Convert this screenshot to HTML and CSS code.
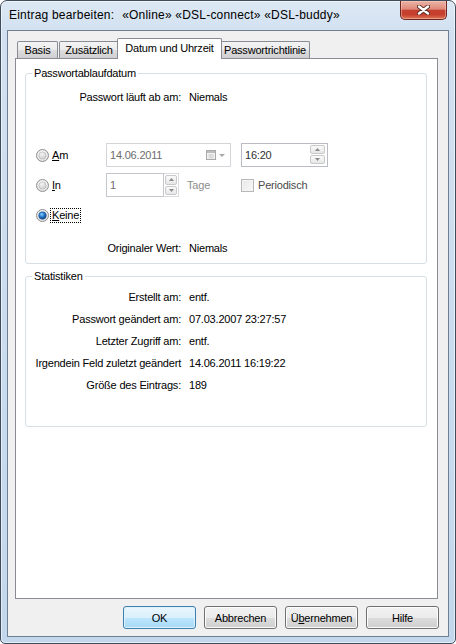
FILE: index.html
```html
<!DOCTYPE html>
<html lang="de">
<head>
<meta charset="utf-8">
<title>Eintrag bearbeiten</title>
<link rel="stylesheet" href="styles.css">
</head>
<body>
<div class="window">
  <div class="titlebar">
    <span class="title"><span class="title-main">Eintrag bearbeiten:</span><span class="title-entry">«Online» «DSL-connect» «DSL-buddy»</span></span>
    <div class="close">
      <svg width="13" height="10" viewBox="0 0 13 10">
        <path d="M2 1.5 L11 8.5 M11 1.5 L2 8.5" stroke="#5a2a24" stroke-width="4.2" stroke-linecap="round"/>
        <path d="M2 1.5 L11 8.5 M11 1.5 L2 8.5" stroke="#ffffff" stroke-width="2.4" stroke-linecap="round"/>
      </svg>
    </div>
  </div>
  <div class="client">
    <div class="tabs">
      <div class="tab tab-basis">Basis</div>
      <div class="tab tab-extra">Zusätzlich</div>
      <div class="tab tab-active">Datum und Uhrzeit</div>
      <div class="tab tab-policy">Passwortrichtlinie</div>
    </div>
    <div class="panel">
      <fieldset class="group group-expiry">
        <legend>Passwortablaufdatum</legend>
        <div class="info-row row-expires"><span class="lbl">Passwort läuft ab am:</span><span class="val">Niemals</span></div>
        <div class="options">
          <div class="opt">
            <svg class="radio" width="13" height="13" viewBox="0 0 13 13">
              <defs>
                <radialGradient id="ro" cx="50%" cy="35%" r="70%"><stop offset="0" stop-color="#ffffff"/><stop offset="1" stop-color="#dcdcdc"/></radialGradient>
                <radialGradient id="ri" cx="40%" cy="30%" r="80%"><stop offset="0" stop-color="#f6f6f6"/><stop offset="1" stop-color="#c8c8c8"/></radialGradient>
              </defs>
              <circle cx="6.5" cy="6.5" r="6" fill="url(#ro)" stroke="#8e8f8f"/>
              <circle cx="6.5" cy="6.5" r="3.6" fill="url(#ri)" stroke="#b4b4b4" stroke-width="0.6"/>
            </svg>
            <span class="opt-label"><u>A</u>m</span>
          </div>
          <div class="field date-field">
            <span class="field-text">14.06.2011</span>
            <svg class="cal" width="20" height="10" viewBox="0 0 20 10">
              <rect x="0.5" y="0.5" width="9" height="9" fill="#f2f2f2" stroke="#a9a9a9"/>
              <rect x="1" y="1" width="8" height="2" fill="#bdbdbd"/>
              <path d="M2 5 H8 M2 7 H8 M4 4 V9 M6 4 V9" stroke="#cfcfcf" stroke-width="0.8"/>
              <path d="M13 4 L19 4 L16 7 Z" fill="#a9a9a9"/>
            </svg>
          </div>
          <div class="field time-field">
            <span class="field-text time-text">16:20</span>
            <div class="spin">
              <div class="spin-btn"><svg width="5" height="3" viewBox="0 0 5 3"><path d="M0 3 L2.5 0 L5 3 Z" fill="#8a8a8a"/></svg></div>
              <div class="spin-btn"><svg width="5" height="3" viewBox="0 0 5 3"><path d="M0 0 L2.5 3 L5 0 Z" fill="#8a8a8a"/></svg></div>
            </div>
          </div>

          <div class="opt">
            <svg class="radio" width="13" height="13" viewBox="0 0 13 13">
              <circle cx="6.5" cy="6.5" r="6" fill="url(#ro)" stroke="#8e8f8f"/>
              <circle cx="6.5" cy="6.5" r="3.6" fill="url(#ri)" stroke="#b4b4b4" stroke-width="0.6"/>
            </svg>
            <span class="opt-label"><u>I</u>n</span>
          </div>
          <div class="days">
            <div class="field days-field"><span class="field-text">1</span></div>
            <div class="spin spin-days">
              <div class="spin-btn"><svg width="5" height="3" viewBox="0 0 5 3"><path d="M0 3 L2.5 0 L5 3 Z" fill="#8a8a8a"/></svg></div>
              <div class="spin-btn"><svg width="5" height="3" viewBox="0 0 5 3"><path d="M0 0 L2.5 3 L5 0 Z" fill="#8a8a8a"/></svg></div>
            </div>
            <span class="days-unit">Tage</span>
          </div>
          <div class="check">
            <span class="checkbox"></span>
            <span class="check-label">Periodisch</span>
          </div>

          <div class="opt">
            <svg class="radio" width="13" height="13" viewBox="0 0 13 13">
              <defs>
                <radialGradient id="rc" cx="40%" cy="35%" r="70%"><stop offset="0" stop-color="#8fd0ff"/><stop offset="0.45" stop-color="#2a7fd0"/><stop offset="1" stop-color="#0d3a78"/></radialGradient>
              </defs>
              <circle cx="6.5" cy="6.5" r="6" fill="url(#ro)" stroke="#8e8f8f"/>
              <circle cx="6.5" cy="6.5" r="3.8" fill="url(#rc)" stroke="#1b4f8f" stroke-width="0.6"/>
            </svg>
            <span class="opt-label focus"><u>K</u>eine</span>
          </div>
        </div>
        <div class="info-row row-orig"><span class="lbl">Originaler Wert:</span><span class="val">Niemals</span></div>
      </fieldset>

      <fieldset class="group group-stats">
        <legend>Statistiken</legend>
        <div class="stats">
          <div class="stat-row"><span class="lbl">Erstellt am:</span><span class="val">entf.</span></div>
          <div class="stat-row"><span class="lbl">Passwort geändert am:</span><span class="val">07.03.2007 23:27:57</span></div>
          <div class="stat-row"><span class="lbl">Letzter Zugriff am:</span><span class="val">entf.</span></div>
          <div class="stat-row"><span class="lbl">Irgendein Feld zuletzt geändert</span><span class="val">14.06.2011 16:19:22</span></div>
          <div class="stat-row"><span class="lbl">Größe des Eintrags:</span><span class="val">189</span></div>
        </div>
      </fieldset>
    </div>
    <div class="buttons">
      <div class="btn btn-default">OK</div>
      <div class="btn">Abbrechen</div>
      <div class="btn">Ü<u>b</u>ernehmen</div>
      <div class="btn">Hilfe</div>
    </div>
  </div>
</div>
</body>
</html>
```

FILE: styles.css
```css
* { box-sizing: border-box; }

html, body {
  margin: 0;
  padding: 0;
  background: #ffffff;
}

body {
  font-family: "Liberation Sans", Arial, sans-serif;
  font-size: 11px;
  color: #000000;
  letter-spacing: -0.2px;
}

.window {
  width: 456px;
  height: 644px;
  border: 1px solid #3f4c5c;
  border-radius: 7px 7px 5px 5px;
  background: linear-gradient(to bottom, #dde8f4 0px, #d2e1f1 30px, #c9dbee 60%, #c3d7ec 100%);
  box-shadow: inset 0 0 0 1px rgba(255, 255, 255, 0.55);
  padding: 0 6px 6px 6px;
  display: flex;
  flex-direction: column;
}

.titlebar {
  height: 29px;
  display: flex;
  align-items: flex-start;
  justify-content: space-between;
  padding-left: 2px;
}

.title {
  font-size: 12px;
  letter-spacing: 0.2px;
  line-height: 29px;
  color: #000000;
  white-space: nowrap;
}

.title-entry {
  margin-left: 8px;
}

.close {
  width: 47px;
  height: 19px;
  margin-right: 2px;
  border: 1px solid #6b261e;
  border-top: none;
  border-radius: 0 0 5px 5px;
  background: linear-gradient(to bottom, #eab3a6 0%, #df8a7a 45%, #c7402f 52%, #c53f2d 75%, #de7355 100%);
  box-shadow: inset 0 0 0 1px rgba(255, 210, 200, 0.45);
  display: flex;
  align-items: center;
  justify-content: center;
}

.client {
  flex: 1;
  border: 1px solid #6f7f93;
  background: #f0f0f0;
  padding: 7px 10px 7px 7px;
  display: flex;
  flex-direction: column;
}

/* Tabs */
.tabs {
  height: 20px;
  display: flex;
  align-items: flex-end;
  padding-left: 2px;
}

.tab {
  height: 17px;
  line-height: 16px;
  border: 1px solid #898c95;
  border-bottom: none;
  border-radius: 2px 2px 0 0;
  background: linear-gradient(to bottom, #f3f3f3 0%, #ebebeb 50%, #dddddd 51%, #d0d0d0 100%);
  text-align: center;
  white-space: nowrap;
}

.tab-basis { width: 41px; }
.tab-extra { width: 60px; margin-left: 1px; }
.tab-policy { width: 90px; margin-left: -2px; }

.tab-active {
  width: 105px;
  height: 21px;
  line-height: 18px;
  padding-bottom: 2px;
  margin-left: -2px;
  margin-bottom: -1px;
  background: #ffffff;
  position: relative;
  z-index: 1;
}

.panel {
  flex: 1;
  border: 1px solid #898c95;
  background: #ffffff;
  padding: 7px 10px 0 9px;
}

/* Group boxes */
.group {
  margin: 0;
  min-width: 0;
  padding: 0;
  border: 1px solid #d5dfe5;
  border-radius: 3px;
}

.group legend {
  margin-left: 6px;
  padding: 0 2px;
  line-height: 14px;
}

.group-expiry {
  padding-bottom: 3px;
}

.group-stats {
  margin-top: 5px;
  padding-bottom: 30px;
}

.info-row,
.stat-row {
  display: flex;
  align-items: center;
  white-space: nowrap;
}

.info-row { height: 24px; }
.stat-row { height: 22px; }

.row-expires { margin-top: 5px; }
.row-orig { margin-top: 9px; }

.lbl {
  width: 155px;
  text-align: right;
}

.val {
  margin-left: 8px;
}

.stats {
  margin-top: 3px;
}

/* Options */
.options {
  margin-top: 34px;
  display: grid;
  grid-template-columns: 70px 125px auto;
  grid-auto-rows: 24px;
  column-gap: 10px;
  row-gap: 6px;
  align-items: center;
}

.opt {
  display: flex;
  align-items: center;
  padding-left: 10px;
  grid-column: 1;
}

.radio {
  flex: none;
  display: block;
}

.opt-label {
  margin-left: 3px;
  line-height: 13px;
}

.opt-label.focus {
  margin-left: 2px;
  padding: 0 1px;
  outline: 1px dotted #000000;
  outline-offset: 0;
}

.field {
  height: 24px;
  border: 1px solid #b9bcc2;
  background: #ffffff;
  display: flex;
  align-items: center;
}

.field-text {
  padding-left: 3px;
  color: #6d6d6d;
  flex: 1;
}

.date-field {
  width: 125px;
  border-color: #d3d5d9;
  padding-right: 4px;
}

.cal {
  display: block;
  flex: none;
}

.time-field {
  width: 87px;
  padding-right: 2px;
}

.time-text {
  color: #303030;
}

.spin {
  width: 15px;
  display: flex;
  flex-direction: column;
  gap: 1px;
}

.spin-btn {
  height: 9px;
  border: 1px solid #c9c9c9;
  border-radius: 2px;
  background: linear-gradient(to bottom, #fafafa, #e6e6e6);
  display: flex;
  align-items: center;
  justify-content: center;
}

.spin-btn svg { display: block; }

.time-field .spin {
  height: 20px;
}

.days {
  display: flex;
  align-items: center;
  height: 24px;
}

.days-field {
  width: 58px;
  border-color: #c4c6cb;
}

.spin-days {
  height: 24px;
  border: 1px solid #d9dbe0;
  border-left: none;
  padding: 1px;
  gap: 1px;
}

.spin-days .spin-btn {
  height: 10px;
}

.days-unit {
  margin-left: 8px;
  color: #8c8c8c;
}

.check {
  display: flex;
  align-items: center;
}

.checkbox {
  width: 13px;
  height: 13px;
  border: 1px solid #b8b8b8;
  background: linear-gradient(135deg, #e8e8e8, #f8f8f8);
  box-shadow: inset 0 0 0 1px #f4f4f4;
}

.check-label {
  margin-left: 4px;
  color: #4a4a4a;
}

/* Buttons */
.buttons {
  margin-top: 7px;
  margin-right: -1px;
  display: flex;
  justify-content: flex-end;
  gap: 8px;
}

.btn {
  width: 73px;
  height: 23px;
  border: 1px solid #707070;
  border-radius: 3px;
  background: linear-gradient(to bottom, #f2f2f2 0%, #ebebeb 50%, #dddddd 51%, #cfcfcf 100%);
  box-shadow: inset 0 0 0 1px #fcfcfc;
  display: flex;
  align-items: center;
  justify-content: center;
  white-space: nowrap;
}

.btn-default {
  border-color: #3c7fb1;
  background: linear-gradient(to bottom, #eaf6fd 0%, #d9f0fc 50%, #bee6fd 51%, #a7d9f5 100%);
  box-shadow: inset 0 0 0 1px #dff2fc;
}
```
